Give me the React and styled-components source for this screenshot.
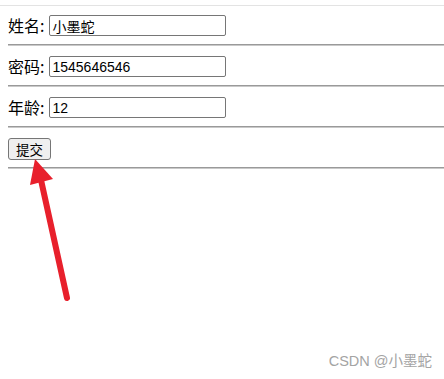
import React from "react";
import styled, { createGlobalStyle } from "styled-components";

const GlobalStyle = createGlobalStyle`
	html, body {
		margin: 0;
		padding: 0;
		background: #ffffff;
	}
	body {
		font-family: "Noto Sans CJK SC", "Liberation Sans", sans-serif;
		color: #000;
	}
`

const Page = styled.div`
	position: relative;
	width: 444px;
	height: 379px;
	overflow: hidden;
`

const TopEdge = styled.div`
	margin-top: 5px;
	height: 1px;
	background-color: #e3e3e3;
`

const Form = styled.form`
	padding: 9px 0 0 8px;
	margin: 0;
`

const Row = styled.div`
	display: flex;
	align-items: center;
	gap: 5px;
	height: 21px;
`

const Label = styled.span`
	font-family: "Noto Sans CJK SC", "Liberation Sans", sans-serif;
	font-size: 16px;
	line-height: 21px;
`

const Field = styled.input`
	box-sizing: border-box;
	width: 177px;
	height: 21px;
	margin: 0;
	padding: 1px 2px;
	border: 1px solid #767676;
	border-radius: 2px;
	font-family: "Liberation Sans", "Noto Sans CJK SC", sans-serif;
	font-size: 14px;
	color: #000;
	background: #fff;
	outline: none;
`

const Submit = styled.button`
	box-sizing: border-box;
	height: 22px;
	padding: 0 7px;
	margin: 1px 0 0 0;
	border: 1px solid #767676;
	border-radius: 3px;
	background-color: #efefef;
	font-family: "Noto Sans CJK SC", "Liberation Sans", sans-serif;
	font-size: 13.5px;
	line-height: 18px;
	color: #000;
`

const Rule = styled.div`
	margin: 8px 0 10px 0;
	border-top: 1px solid #9a9a9a;
	border-bottom: 1px solid #c9c9c9;
`

const Arrow = styled.svg`
	position: absolute;
	left: 0;
	top: 0;
	pointer-events: none;
`

const Watermark = styled.div`
	position: absolute;
	right: 12px;
	bottom: 9px;
	font-family: "Liberation Sans", "Noto Sans CJK SC", sans-serif;
	font-size: 14.5px;
	color: #a4a4a4;
`

function App() {
	return (
		<Page>
			<GlobalStyle />
			<TopEdge />
			<Form onSubmit={e => e.preventDefault()}>
				<Row>
					<Label>姓名:</Label>
					<Field type="text" defaultValue="小墨蛇" />
				</Row>
				<Rule />
				<Row>
					<Label>密码:</Label>
					<Field type="text" defaultValue="1545646546" />
				</Row>
				<Rule />
				<Row>
					<Label>年龄:</Label>
					<Field type="text" defaultValue="12" />
				</Row>
				<Rule />
				<Row>
					<Submit type="submit">提交</Submit>
				</Row>
				<Rule />
			</Form>

			{/* red annotation arrow pointing at the submit button */}
			<Arrow width="444" height="379" viewBox="0 0 444 379">
				<line x1="67" y1="298" x2="41" y2="180" stroke="#e8202c" strokeWidth="6" strokeLinecap="round" />
				<polygon points="35,159 30,185 53,179" fill="#e8202c" />
			</Arrow>

			<Watermark>CSDN @小墨蛇</Watermark>
		</Page>
	);
}

export default App;
